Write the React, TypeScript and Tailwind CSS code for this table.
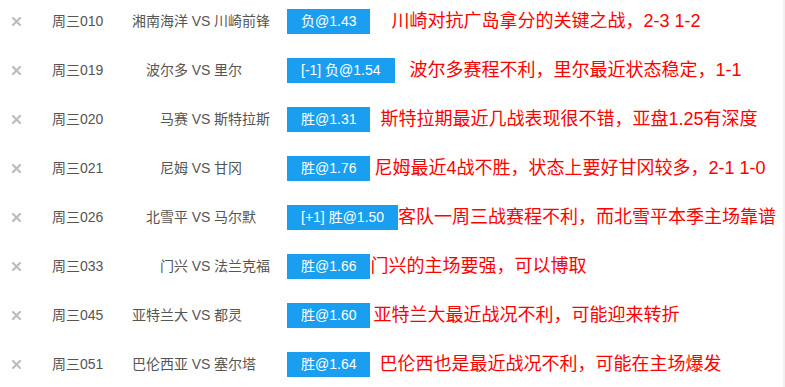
const rows = [
  { id: "周三010", home: "湘南海洋", away: "川崎前锋", tip: "负@1.43", note: "川崎对抗广岛拿分的关键之战，2-3 1-2", gap: "ml-[21px]" },
  { id: "周三019", home: "波尔多", away: "里尔", tip: "[-1] 负@1.54", note: "波尔多赛程不利，里尔最近状态稳定，1-1", gap: "ml-[15px]" },
  { id: "周三020", home: "马赛", away: "斯特拉斯", tip: "胜@1.31", note: "斯特拉期最近几战表现很不错，亚盘1.25有深度", gap: "ml-[10px]" },
  { id: "周三021", home: "尼姆", away: "甘冈", tip: "胜@1.76", note: "尼姆最近4战不胜，状态上要好甘冈较多，2-1 1-0", gap: "ml-[4px]" },
  { id: "周三026", home: "北雪平", away: "马尔默", tip: "[+1] 胜@1.50", note: "客队一周三战赛程不利，而北雪平本季主场靠谱", gap: "ml-0" },
  { id: "周三033", home: "门兴", away: "法兰克福", tip: "胜@1.66", note: "门兴的主场要强，可以博取", gap: "ml-0" },
  { id: "周三045", home: "亚特兰大", away: "都灵", tip: "胜@1.60", note: "亚特兰大最近战况不利，可能迎来转折", gap: "ml-[3px]" },
  { id: "周三051", home: "巴伦西亚", away: "塞尔塔", tip: "胜@1.64", note: "巴伦西也是最近战况不利，可能在主场爆发", gap: "ml-[9px]" },
];

function CloseMark() {
  return (
    <svg width="9" height="9" viewBox="0 0 9 9" className="block">
      <path d="M1 1 L8 8 M8 1 L1 8" stroke="#bdbdbd" strokeWidth="2.2" strokeLinecap="square" />
    </svg>
  );
}

export default function App() {
  return (
    <div
      className="flex h-[387px] w-[785px] overflow-hidden bg-white"
      style={{ fontFamily: '"Liberation Sans", "Noto Sans CJK SC", sans-serif' }}
    >
      <div className="-mt-[3px] flex-1">
        {rows.map((r) => (
          <div key={r.id} className="flex h-[49px] items-center whitespace-nowrap">
            <div className="flex w-[32px] justify-center">
              <CloseMark />
            </div>
            <div className="ml-[20px] w-[60px] text-[14px] text-[#555]">{r.id}</div>
            <div className="w-[76px] text-right text-[14px] text-[#555]">{r.home}</div>
            <div className="w-[26px] text-center text-[14px] text-[#555]">VS</div>
            <div className="w-[73px] text-[14px] text-[#555]">{r.away}</div>
            <div className="flex h-[25px] min-w-[81px] items-center justify-center bg-[#1a9ff0] px-[14px] text-[14px] text-white">
              {r.tip}
            </div>
            <div className={`${r.gap} text-[18px] text-[#ff0000]`}>{r.note}</div>
          </div>
        ))}
      </div>
      <div className="w-[2px] bg-[#f0f0f0]" />
    </div>
  );
}
